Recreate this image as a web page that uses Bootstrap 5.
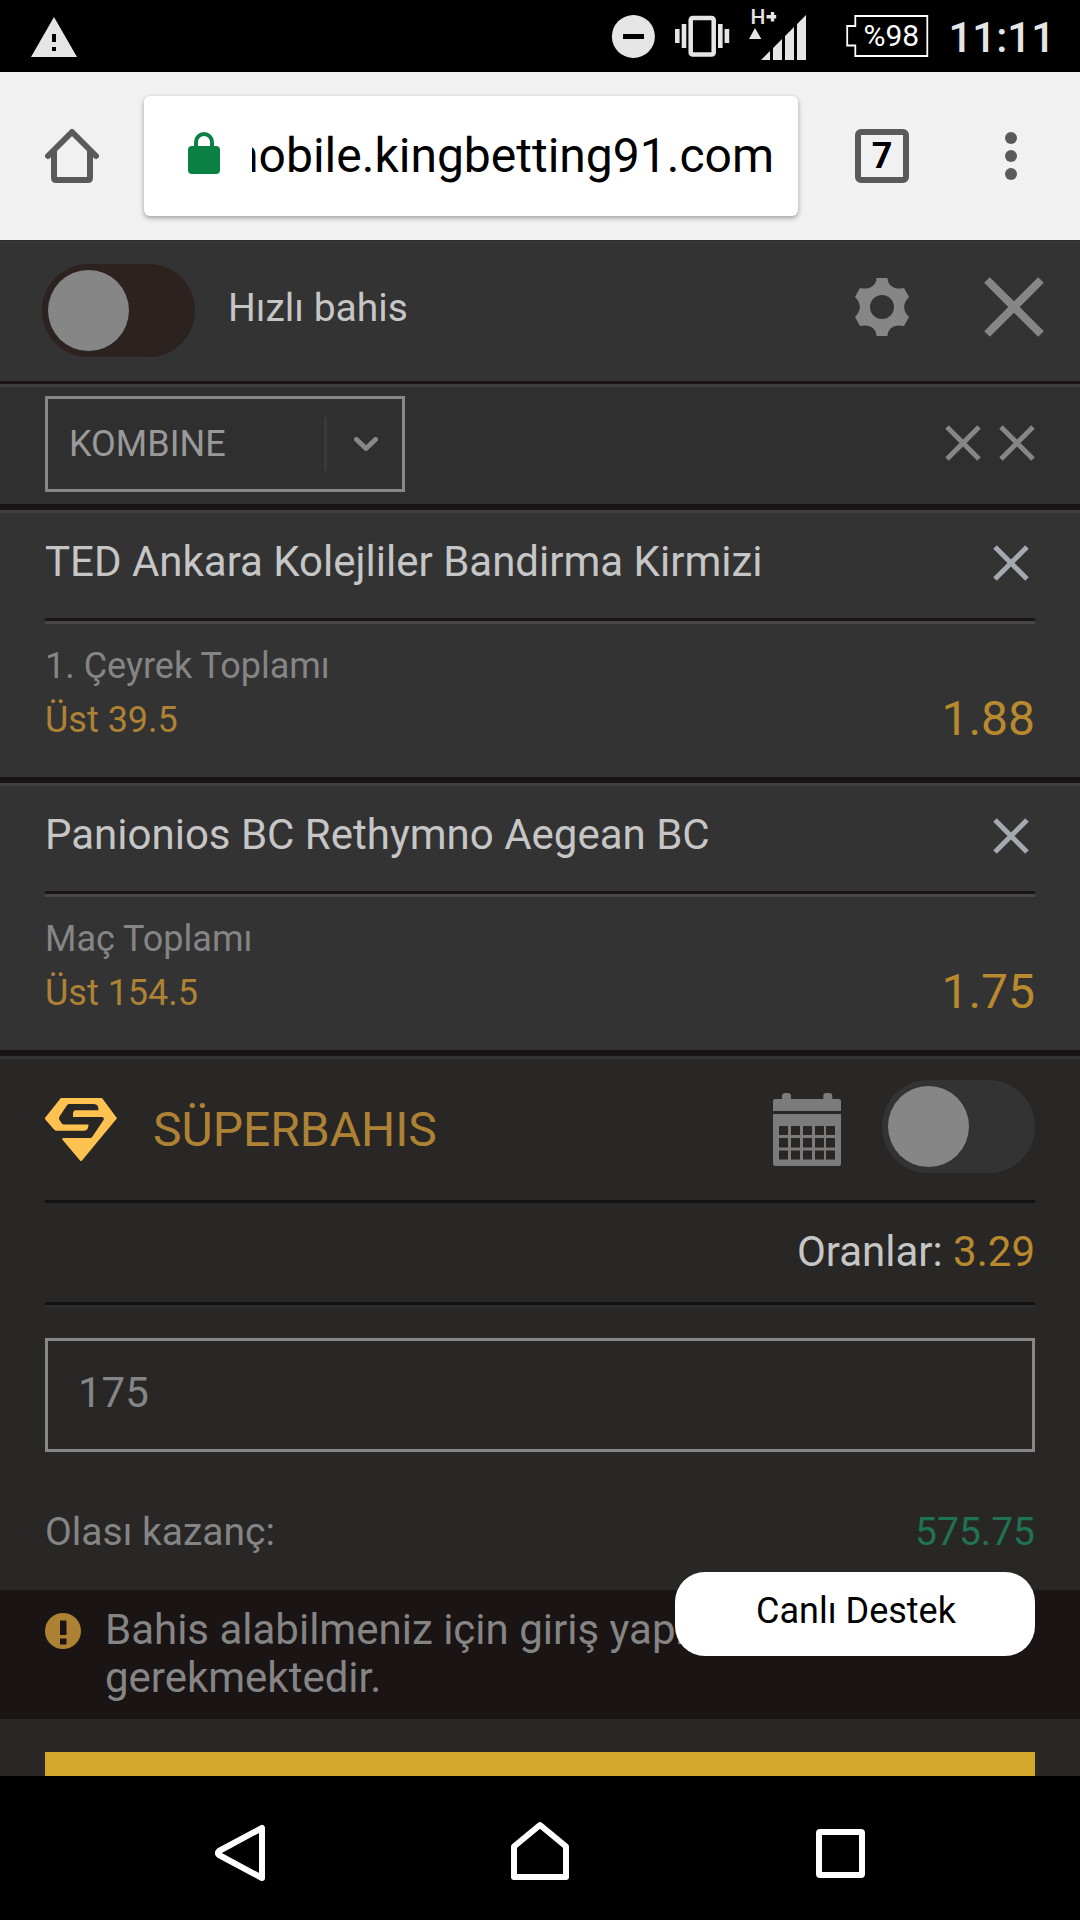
<!DOCTYPE html>
<html lang="tr">
<head>
<meta charset="utf-8">
<meta name="viewport" content="width=device-width, initial-scale=1">
<title>Kupon</title>
<link href="https://cdn.jsdelivr.net/npm/bootstrap@5.3.0/dist/css/bootstrap.min.css" rel="stylesheet">
<style>
  body { width: 1080px; height: 1920px; overflow: hidden; background: #000; font-family: Roboto, "Noto Sans", sans-serif; line-height: 1; }
  svg { display: block; flex: none; }
  .status-bar { height: 72px; padding: 0 25px 0 31px; background: #000; color: #e5e5e5; }
  .clock { font-size: 42px; line-height: 76px; font-weight: 500; }
  .browser-bar { height: 168px; padding: 0 45px; background: #f1f1f1; }
  .url-box { width: 654px; height: 120px; margin-left: 45px; padding: 0 24px 0 44px; background: #fff; border-radius: 6px; box-shadow: 0 2px 5px rgba(0,0,0,.35); }
  .lock { margin-top: -6px; }
  .url-clip { width: 522px; margin-left: 32px; overflow: hidden; white-space: nowrap; font-size: 48px; line-height: 119px; color: #000; margin-top: -2px; }
  .tab-count { width: 54px; height: 54px; margin-left: 57px; border: 6px solid #5a5a5a; border-radius: 6px; font-size: 36px; font-weight: 700; line-height: 43px; color: #000; text-shadow: 0 0 3px #fff; }
  .slip { height: 1536px; overflow: hidden; background: #282725; color: #858585; }
  .slip-head { height: 144px; padding: 0 36px 0 42px; background: #333; border-bottom: 3px solid #1a1414; box-shadow: inset 0 2px 0 #303030, inset 0 3px 0 #3a3a3a; }
  .slip-label { margin: -5px 0 0 33px; }
  .head-icon { margin-top: -8px; }
  .head-close { margin: -7px 0 0 75px; }
  .slip-type { height: 126px; padding: 9px 45px 0; background: #2f2f2f; border-top: 3px solid #3d3d3d; border-bottom: 6px solid #1a1414; }
  .clear-icons { height: 94px; gap: 18px; }
  .switch-track { width: 153px; height: 93px; padding: 6px; border-radius: 46px; background: #2c2321; }
  .switch-track.off-grey { margin: -6px 0 0 41px; background: #333; }
  .knob { width: 81px; height: 81px; border-radius: 50%; background: #868686; }
  .t39 { font-size: 39px; }
  .t36 { font-size: 36px; }
  .t42 { font-size: 42px; }
  .t48 { font-size: 48px; }
  .light { color: #c6c6c6; }
  .gold { color: #b9892d; }
  .gold-soft { color: #ad8234; }
  .green { color: #1f7352; }
  .kind-select { width: 360px; height: 96px; padding: 0 24px 0 21px; border: 3px solid #878787; color: #999; }
  .kind-sep { width: 3px; height: 54px; margin-left: auto; margin-right: 27px; background: #3a3a3a; }
  .bet { background: #333; border-top: 3px solid #3f3f3f; border-bottom: 6px solid #1a1414; padding: 0 45px; }
  .bet-title { height: 108px; border-bottom: 3px solid #1a1414; padding: 0 6px 8px 0; }
  .bet-title svg { margin-top: 3px; }
  .bet-body { height: 156px; border-top: 3px solid #474747; padding-top: 15px; line-height: 54px; }
  .bet-odds { margin-top: 53px; }
  .totals { border-top: 3px solid #333; padding: 0 45px; }
  .super-row { height: 144px; border-bottom: 3px solid #131213; }
  .super-name { margin-left: 36px; }
  .odds-row { height: 102px; border-bottom: 3px solid #131213; line-height: 97px; }
  .stake-wrap { border-top: 3px solid #2d2d2d; padding-top: 30px; }
  .stake { height: 114px; padding: 0 30px; border: 3px solid #878787; line-height: 104px; }
  .gain-row { height: 138px; line-height: 160px; }
  .notice { height: 129px; padding: 16px 45px 0; background: #1a1414; line-height: 48px; }
  .submit-bar { height: 24px; margin: 33px 45px 0; background: #d3a82a; }
  .live-help { left: 675px; top: 1572px; width: 360px; height: 84px; border-radius: 30px; background: #fff; color: #000; line-height: 78px; padding-left: 2px; }
  .nav-bar { height: 144px; padding: 10px 215px 0; background: #000; }
</style>
</head>
<body class="m-0 position-relative">

<header class="status-bar d-flex align-items-start justify-content-between">
  <svg width="46" height="72" viewBox="31 0 46 72"><path fill="#e5e5e5" d="M54 17L77 57H31Z"/><path fill="#000" d="M52 34h4v8h-4zM52 47h4v4h-4z"/></svg>
  <div class="d-flex align-items-start">
    <svg width="340" height="72" viewBox="608 0 340 72" fill="#e5e5e5">
      <circle cx="633.4" cy="36.5" r="21.5"/><path fill="#000" d="M623 34h21v5h-21z"/>
      <rect x="690.7" y="18" width="23" height="36.5" rx="2" fill="none" stroke="#e5e5e5" stroke-width="4.5"/>
      <path d="M681.7 24h4.6v24h-4.6zM675 29h4.6v14H675zM718 24h4.6v24H718zM724.6 29h4.6v14h-4.6z"/>
      <path d="M755 28L761.3 39H749zM761 60L770 51V60zM773 60V48L782 39V60zM785 60V36L794 27V60zM797 60V24L806 15V60z"/>
      <text x="750.5" y="24" font-family="Roboto" font-size="21" font-weight="500">H</text>
      <path d="M766.5 15h4.3v-3h3.4v3h2v3.4h-2v3h-3.4v-3h-4.3z"/>
      <path d="M855.3 16H927.300V56H855.3V45.500H847.200V26H855.3Z" fill="none" stroke="#fff" stroke-width="1.8"/>
      <text x="863.5" y="46" fill="#fff" font-family="Roboto" font-size="30">%98</text>
    </svg>
    <span class="clock">11:11</span>
  </div>
</header>

<section class="browser-bar d-flex align-items-center">
  <svg width="54" height="54" viewBox="45 129 54 54" fill="none" stroke="#5a5a5a" stroke-width="6" stroke-linecap="round" stroke-linejoin="round"><path d="M48 156L72 132L96 156M54 152V178q0 2 2 2H88q2 0 2-2V152"/></svg>
  <div class="url-box d-flex align-items-center">
    <svg class="lock" width="32" height="42" viewBox="188 132 32 42"><rect x="188" y="146" width="32" height="28" rx="4" fill="#0b8043"/><path d="M196 148v-6a8 8 0 0 1 16 0v6" fill="none" stroke="#0b8043" stroke-width="4"/></svg>
    <div class="url-clip d-flex justify-content-end"><span>mobile.kingbetting91.com</span></div>
  </div>
  <div class="tab-count text-center">7</div>
  <svg class="ms-auto" width="48" height="48" viewBox="987 132 48 48" fill="#5a5a5a"><circle cx="1011" cy="138" r="6"/><circle cx="1011" cy="156" r="6"/><circle cx="1011" cy="174" r="6"/></svg>
</section>

<main class="slip">
  <div class="slip-head d-flex align-items-center">
    <div class="switch-track"><div class="knob"></div></div>
    <span class="slip-label t39 light">Hızlı bahis</span>
    <svg class="head-icon ms-auto" width="54" height="58" viewBox="-27 -29 54 58"><path fill="#868686" fill-rule="evenodd" d="M-5.500-29H5.500C5.500-22 12-16.500 22-19L27-10C20.500-3.500 20.500 3.500 27 10L22 19C12 16.500 5.500 22 5.500 29H-5.500C-5.500 22-12 16.500-22 19L-27 10C-20.500 3.500-20.500-3.500-27-10L-22-19C-12-16.500-5.500-22-5.500-29ZM0-12A12 12 0 1 0 0 12A12 12 0 1 0 0-12Z"/></svg>
    <svg class="head-close" width="60" height="60" viewBox="0 0 60 60" stroke="#868686" stroke-width="8"><path d="M3 3L57 57M57 3L3 57"/></svg>
  </div>

  <div class="slip-type d-flex align-items-start justify-content-between">
    <div class="kind-select d-flex align-items-center t36">
      <span>KOMBINE</span><i class="kind-sep"></i>
      <svg width="24" height="15" viewBox="0 0 24 15" fill="none" stroke="#878787" stroke-width="5" stroke-linecap="round" stroke-linejoin="round"><path d="M2.500 2.500L12 11.500L21.500 2.500"/></svg>
    </div>
    <div class="clear-icons d-flex align-items-center">
      <svg width="36" height="36" viewBox="0 0 36 36" stroke="#868686" stroke-width="5"><path d="M2 2L34 34M34 2L2 34"/></svg>
      <svg width="36" height="36" viewBox="0 0 36 36" stroke="#868686" stroke-width="5"><path d="M2 2L34 34M34 2L2 34"/></svg>
    </div>
  </div>

  <article class="bet">
    <div class="bet-title d-flex align-items-center justify-content-between t42 light">
      <span>TED Ankara Kolejliler Bandirma Kirmizi</span>
      <svg width="36" height="36" viewBox="0 0 36 36" stroke="#a4a8b1" stroke-width="5"><path d="M2 2L34 34M34 2L2 34"/></svg>
    </div>
    <div class="bet-body d-flex align-items-start justify-content-between t36">
      <div><div>1. Çeyrek Toplamı</div><div class="gold-soft">Üst 39.5</div></div>
      <span class="bet-odds t48 gold">1.88</span>
    </div>
  </article>

  <article class="bet">
    <div class="bet-title d-flex align-items-center justify-content-between t42 light">
      <span>Panionios BC Rethymno Aegean BC</span>
      <svg width="36" height="36" viewBox="0 0 36 36" stroke="#a4a8b1" stroke-width="5"><path d="M2 2L34 34M34 2L2 34"/></svg>
    </div>
    <div class="bet-body d-flex align-items-start justify-content-between t36">
      <div><div>Maç Toplamı</div><div class="gold-soft">Üst 154.5</div></div>
      <span class="bet-odds t48 gold">1.75</span>
    </div>
  </article>

  <section class="totals">
    <div class="super-row d-flex align-items-center">
      <svg width="72" height="63" viewBox="45 1098 72 63"><path fill="#ffc14f" d="M61.300 1098H102L117 1118.300L82 1160.500Q81 1161.500 80 1160.500L62.300 1139.500Q61.800 1138 63.500 1138H90Q91.500 1138 92.500 1136.500L103.500 1120Q104.500 1117 102 1117H73V1114Q73 1110.300 76 1110.300H98.500Q98.500 1104 94 1104H69.500Q68 1104 67 1105.300L59.500 1116.500Q58.500 1118.300 59.500 1120L61.500 1123Q62.500 1124.500 64 1124.500H88.500Q88.500 1130.700 84 1130.700H56.500Q55.400 1130.700 54.500 1130L45.300 1119.500Q44.700 1118.300 45.300 1117.500L60 1099Q60.500 1098 61.300 1098Z"/></svg>
      <span class="super-name t48 gold-soft">SÜPERBAHIS</span>
      <svg class="ms-auto" width="68" height="73" viewBox="773 1093 68 73">
        <g fill="#7b7b7b"><rect x="782" y="1093" width="9" height="12" rx="3"/><rect x="823.300" y="1093" width="9" height="12" rx="3"/><path d="M773 1111V1101q0-2 2-2H839q2 0 2 2V1111zM773 1114H841V1164q0 2-2 2H775q-2 0-2-2z"/></g>
        <path fill="#282725" d="M779 1126h9v9h-9zM791 1126h9v9h-9zM803 1126h9v9h-9zM815 1126h9v9h-9zM826 1126h9v9h-9zM779 1138h9v9.500h-9zM791 1138h9v9.500h-9zM803 1138h9v9.500h-9zM815 1138h9v9.500h-9zM826 1138h9v9.500h-9zM779 1150.500h9v9h-9zM791 1150.500h9v9h-9zM803 1150.500h9v9h-9zM815 1150.500h9v9h-9zM826 1150.500h9v9h-9z"/>
      </svg>
      <div class="switch-track off-grey"><div class="knob"></div></div>
    </div>
    <div class="odds-row text-end t42 light">Oranlar: <span class="gold">3.29</span></div>
    <div class="stake-wrap"><div class="stake t42">175</div></div>
    <div class="gain-row d-flex justify-content-between t39"><span>Olası kazanç:</span><span class="green">575.75</span></div>
  </section>

  <div class="notice d-flex t42">
    <svg width="36" height="52" viewBox="45 1606 36 52"><circle cx="63" cy="1631" r="18" fill="#ad8234"/><path fill="#1a1414" d="M60 1620.500h6.500V1635H60zM60 1638.500h6.500v6H60z"/></svg>
    <div class="ms-4">Bahis alabilmeniz için giriş yapmanız<br>gerekmektedir.</div>
  </div>
  <div class="submit-bar"></div>
</main>

<div class="live-help position-absolute text-center t36">Canlı Destek</div>

<nav class="nav-bar d-flex align-items-center justify-content-between">
  <svg width="50" height="58" viewBox="215 1824 50 58" fill="none" stroke="#fff" stroke-width="6" stroke-linejoin="round"><path d="M262 1828V1878L219 1855Q217 1853 219 1851Z"/></svg>
  <svg width="58" height="60" viewBox="512 1824 58 60" fill="none" stroke="#fff" stroke-width="6" stroke-linejoin="round" overflow="visible"><path d="M540 1826L566 1847.500V1878H514V1847.500Z"/></svg>
  <svg width="49" height="49" viewBox="0 0 49 49" fill="none" stroke="#fff" stroke-width="6"><rect x="3" y="3" width="43" height="43" rx="1"/></svg>
</nav>
<script src="https://cdn.jsdelivr.net/npm/bootstrap@5.3.0/dist/js/bootstrap.bundle.min.js"></script>
</body>
</html>
